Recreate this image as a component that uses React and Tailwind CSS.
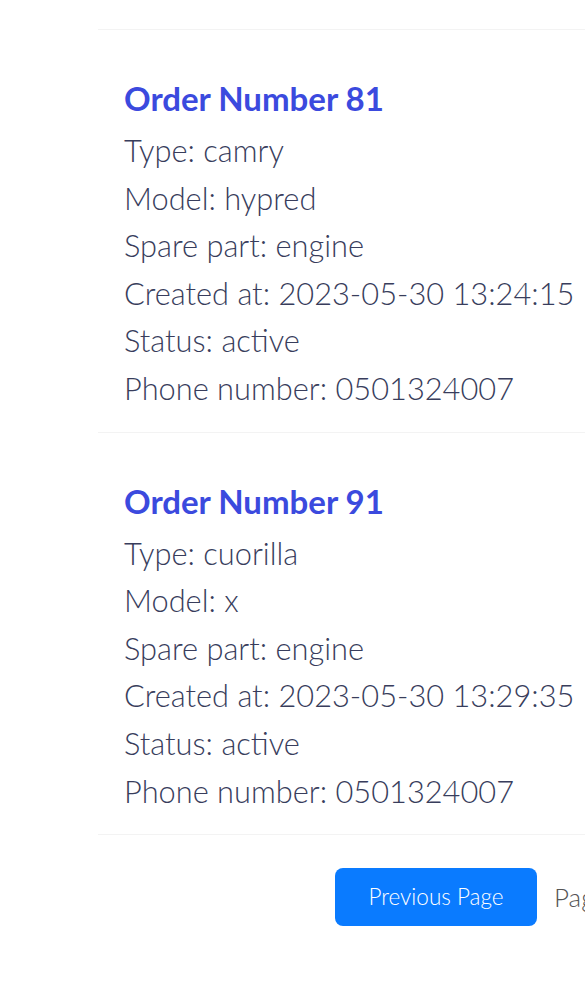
import React from "react";

const orders = [
  { n: 81, type: "camry", model: "hypred", part: "engine", created: "2023-05-30 13:24:15", status: "active", phone: "0501324007" },
  { n: 91, type: "cuorilla", model: "x", part: "engine", created: "2023-05-30 13:29:35", status: "active", phone: "0501324007" },
];

function Card({ o }) {
  return (
    <div className="border-b border-[#f3f3f3] pl-[26px] pt-[44px] pb-[19px]">
      <h2 className="text-[33px] leading-[48px] font-bold text-[#3b4ade] mb-[5px]">Order Number {o.n}</h2>
      <div className="text-[30.8px] leading-[47.6px] font-light text-[#383d5c] whitespace-nowrap">
        <p>Type: {o.type}</p>
        <p>Model: {o.model}</p>
        <p>Spare part: {o.part}</p>
        <p>Created at: {o.created}</p>
        <p>Status: {o.status}</p>
        <p>Phone number: {o.phone}</p>
      </div>
    </div>
  );
}

export default function App() {
  return (
    <div className="w-[585px] h-[985px] overflow-hidden bg-white" style={{ fontFamily: "Lato, 'Noto Sans', sans-serif" }}>
      <div className="ml-[98px] w-[700px]">
        <div className="h-[30px] border-b border-[#f3f3f3]"></div>
        {orders.map((o) => (
          <Card key={o.n} o={o} />
        ))}
      </div>
      <div className="flex items-center mt-[33px] ml-[335px] gap-[17px] whitespace-nowrap w-[500px]">
        <button className="shrink-0 w-[202px] h-[58px] rounded-[8px] bg-[#0a7bff] text-white text-[22.5px] font-light">Previous Page</button>
        <span className="shrink-0 text-[26px] font-light text-[#555]">Page 1 of 2</span>
      </div>
    </div>
  );
}
